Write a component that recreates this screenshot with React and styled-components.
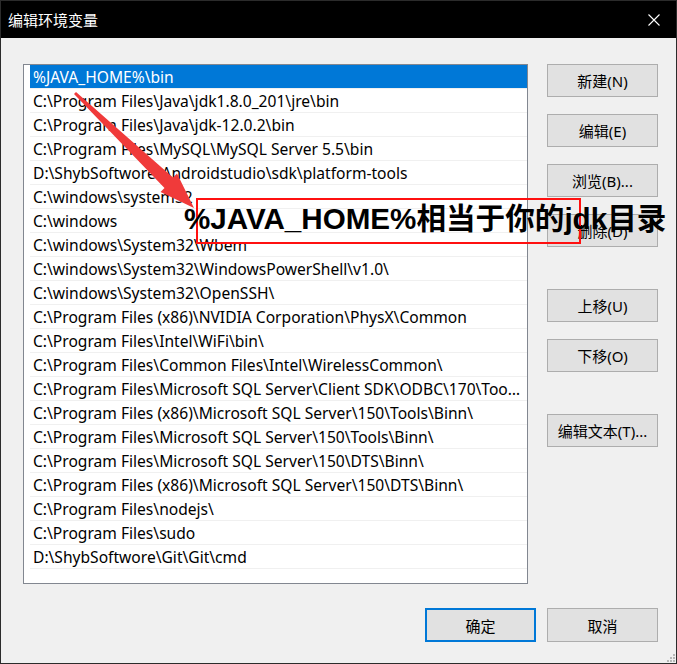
import React from "react";
import styled, { createGlobalStyle } from "styled-components";

const GlobalStyle = createGlobalStyle`
  html, body {
    margin: 0;
    padding: 0;
    background: #f0f0f0;
  }
  * {
    box-sizing: border-box;
  }
`;

const FONT = `"Noto Sans", "Noto Sans CJK SC", sans-serif`;

/* WINDOW */
const Window = styled.div`
  position: relative;
  width: 677px;
  height: 664px;
  border: 1px solid #2b2b2b;
  background: #f0f0f0;
  display: flex;
  flex-direction: column;
  font-family: ${FONT};
  overflow: hidden;
`;

const TitleBar = styled.div`
  height: 37px;
  background: #000;
  color: #fff;
  display: flex;
  align-items: center;
  justify-content: space-between;
  padding: 0 16px 0 7px;
  font-size: 15px;
  font-family: "Noto Sans CJK SC", sans-serif;
`;

const CloseIcon = styled.svg`
  width: 12px;
  height: 12px;
`;

const Body = styled.div`
  flex: 1;
  display: flex;
  flex-direction: column;
  padding: 26px 18px 0 22px;
`;

const MainRow = styled.div`
  display: flex;
  gap: 19px;
`;

/* LIST */
const ListBox = styled.div`
  width: 505px;
  height: 520px;
  background: #fff;
  border: 1px solid #828790;
  padding-left: 6px;
`;

const Row = styled.div`
  height: 24px;
  line-height: 24px;
  padding: 0 4px 0 3px;
  font-size: 15.6px;
  white-space: nowrap;
  overflow: hidden;
  text-overflow: ellipsis;
  border-bottom: 1px solid #f0f0f0;
  color: ${(p) => (p.selected ? "#fff" : "#000")};
  background: ${(p) => (p.selected ? "#0078d7" : "transparent")};
`;

/* BUTTONS */
const ButtonColumn = styled.div`
  display: flex;
  flex-direction: column;
`;

const Button = styled.div`
  width: 111px;
  height: 33px;
  margin-top: ${(p) => (p.gap ? p.gap : 0)}px;
  background: #e1e1e1;
  border: ${(p) => (p.primary ? "2px solid #0078d7" : "1px solid #adadad")};
  display: flex;
  align-items: center;
  justify-content: center;
  font-size: 15px;
  color: #000;
`;

const Footer = styled.div`
  display: flex;
  justify-content: flex-end;
  gap: 11px;
  margin-top: 24px;
`;

const FooterButton = styled(Button)`
  height: 34px;
`;

const SizeGrip = styled.svg`
  position: absolute;
  right: 1px;
  bottom: 1px;
  width: 10px;
  height: 10px;
`;

/* ANNOTATION */
const Overlay = styled.svg`
  position: absolute;
  left: 0;
  top: 0;
  width: 677px;
  height: 664px;
  pointer-events: none;
`;

const NoteBox = styled.div`
  position: absolute;
  left: 195px;
  top: 197px;
  width: 385px;
  height: 46px;
  border: 2px solid #ff1010;
`;

const NoteText = styled.div`
  position: absolute;
  left: 183px;
  top: 200px;
  font-size: 29.6px;
  line-height: 36px;
  font-weight: 700;
  color: #000;
  white-space: nowrap;
  font-family: "Liberation Sans", "Noto Sans CJK SC", sans-serif;
`;

const paths = [
  "%JAVA_HOME%\\bin",
  "C:\\Program Files\\Java\\jdk1.8.0_201\\jre\\bin",
  "C:\\Program Files\\Java\\jdk-12.0.2\\bin",
  "C:\\Program Files\\MySQL\\MySQL Server 5.5\\bin",
  "D:\\ShybSoftwore\\Androidstudio\\sdk\\platform-tools",
  "C:\\windows\\system32",
  "C:\\windows",
  "C:\\windows\\System32\\Wbem",
  "C:\\windows\\System32\\WindowsPowerShell\\v1.0\\",
  "C:\\windows\\System32\\OpenSSH\\",
  "C:\\Program Files (x86)\\NVIDIA Corporation\\PhysX\\Common",
  "C:\\Program Files\\Intel\\WiFi\\bin\\",
  "C:\\Program Files\\Common Files\\Intel\\WirelessCommon\\",
  "C:\\Program Files\\Microsoft SQL Server\\Client SDK\\ODBC\\170\\Tools\\Binn\\",
  "C:\\Program Files (x86)\\Microsoft SQL Server\\150\\Tools\\Binn\\",
  "C:\\Program Files\\Microsoft SQL Server\\150\\Tools\\Binn\\",
  "C:\\Program Files\\Microsoft SQL Server\\150\\DTS\\Binn\\",
  "C:\\Program Files (x86)\\Microsoft SQL Server\\150\\DTS\\Binn\\",
  "C:\\Program Files\\nodejs\\",
  "C:\\Program Files\\sudo",
  "D:\\ShybSoftwore\\Git\\Git\\cmd",
];

const sideButtons = [
  { label: "新建(N)", gap: 0 },
  { label: "编辑(E)", gap: 17 },
  { label: "浏览(B)...", gap: 17 },
  { label: "删除(D)", gap: 17 },
  { label: "上移(U)", gap: 42 },
  { label: "下移(O)", gap: 17 },
  { label: "编辑文本(T)...", gap: 42 },
];

export default function App() {
  return (
    <>
      <GlobalStyle />
      <Window>
        <TitleBar>
          <span>编辑环境变量</span>
          <CloseIcon viewBox="0 0 12 12">
            <path d="M0.5 0.5 L11.5 11.5 M11.5 0.5 L0.5 11.5" stroke="#fff" strokeWidth="1.1" />
          </CloseIcon>
        </TitleBar>
        <Body>
          <MainRow>
            <ListBox>
              {paths.map((p, i) => (
                <Row key={i} selected={i === 0}>
                  {p}
                </Row>
              ))}
            </ListBox>
            <ButtonColumn>
              {sideButtons.map((b) => (
                <Button key={b.label} gap={b.gap}>
                  {b.label}
                </Button>
              ))}
            </ButtonColumn>
          </MainRow>
          <Footer>
            <FooterButton primary>确定</FooterButton>
            <FooterButton>取消</FooterButton>
          </Footer>
        </Body>

        <SizeGrip viewBox="0 0 10 10">
          <rect x="8" y="2" width="2" height="2" fill="#b8b8b8" />
          <rect x="5" y="5" width="2" height="2" fill="#b8b8b8" />
          <rect x="8" y="5" width="2" height="2" fill="#b8b8b8" />
          <rect x="2" y="8" width="2" height="2" fill="#b8b8b8" />
          <rect x="5" y="8" width="2" height="2" fill="#b8b8b8" />
          <rect x="8" y="8" width="2" height="2" fill="#b8b8b8" />
        </SizeGrip>

        <Overlay viewBox="0 0 677 664">
          <polygon
            points="73,93 75,91 172,176.5 176,172.5 193,207 159.5,191 163.5,187"
            fill="#f03a3a"
          />
        </Overlay>
        <NoteBox />
        <NoteText>%JAVA_HOME%相当于你的jdk目录</NoteText>
      </Window>
    </>
  );
}
